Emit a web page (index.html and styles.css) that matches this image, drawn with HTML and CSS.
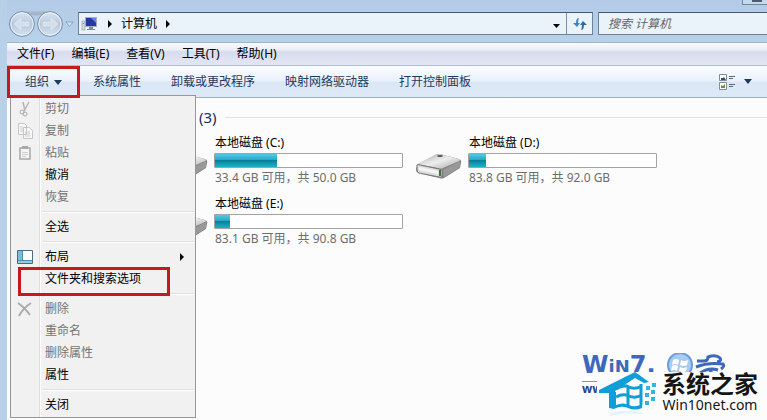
FILE: index.html
```html
<!DOCTYPE html>
<html lang="zh-CN">
<head>
    <meta charset="UTF-8">
    <meta name="viewport" content="width=device-width, initial-scale=1.0">
    <title>计算机</title>
    <link rel="stylesheet" href="styles.css">
</head>
<body>
    <div class="window">

        <!-- Address bar -->
        <header class="nav-bar">
            <span class="caption-buttons"><i></i></span>
            <svg class="nav-buttons" width="66" height="28" viewBox="0 0 66 28" aria-hidden="true">
                <defs>
                    <linearGradient id="ball" x1="0" y1="0" x2="0" y2="1">
                        <stop offset="0" stop-color="#dce6f1"/>
                        <stop offset=".5" stop-color="#b8c9dc"/>
                        <stop offset="1" stop-color="#d5e3f0"/>
                    </linearGradient>
                </defs>
                <path d="M15 1.500h28q-14 8-28 0z" fill="#a3b5cb"/>
                <circle cx="15" cy="14" r="12.4" fill="url(#ball)" stroke="#768aa3"/>
                <circle cx="43" cy="14" r="12.4" fill="url(#ball)" stroke="#768aa3"/>
                <circle cx="15" cy="14" r="11.2" fill="none" stroke="#e8f0f8"/>
                <circle cx="43" cy="14" r="11.2" fill="none" stroke="#e8f0f8"/>
                <path d="M7 14l7-6v4h8v4h-8v4z" fill="#d3dfeb" stroke="#e2ebf3" stroke-width=".6"/>
                <path d="M51 14l-7-6v4h-8v4h8v4z" fill="#d3dfeb" stroke="#e2ebf3" stroke-width=".6"/>
                <path d="M59 12h7l-3.500 4.500z" fill="#d5e2f0" stroke="#8198b5" stroke-width=".8"/>
            </svg>
            <div class="address">
                <svg width="18" height="16" viewBox="0 0 18 16" aria-hidden="true">
                    <rect x="1" y="5" width="3" height="9" fill="#d5dce2" stroke="#8997a5" stroke-width=".6"/>
                    <rect x="2" y="7" width="1" height="1" fill="#4d9a50"/>
                    <rect x="4.500" y="1.500" width="11" height="9" fill="#2437a5" stroke="#a3aec0"/>
                    <path d="M10 2h5v5z" fill="#6582e0"/>
                    <path d="M8 11h4v2h2v1H6v-1h2z" fill="#7e8b99"/>
                </svg>
                <svg class="crumb-arrow" width="4" height="8" viewBox="0 0 4 8"><path d="M0 0l4 4-4 4z"/></svg>
                <span>计算机</span>
                <svg class="crumb-arrow" width="4" height="8" viewBox="0 0 4 8"><path d="M0 0l4 4-4 4z"/></svg>
                <button class="address-drop" aria-label="地址"><svg width="7" height="4" viewBox="0 0 7 4"><path d="M0 0h7L3.500 4z"/></svg></button>
                <button class="refresh" aria-label="刷新">
                    <svg width="16" height="14" viewBox="0 0 16 14">
                        <path d="M7 1Q4 1 4 6H1l4 4 3-4H6Q6 3 7 1z" fill="#3f88bd"/>
                        <path d="M9 13q3 0 3-5h3l-4-4-3 4h2q0 3-1 5z" fill="#2f6ea5"/>
                    </svg>
                </button>
            </div>
            <input class="search" type="text" placeholder="搜索 计算机" aria-label="搜索">
        </header>

        <!-- Menu bar -->
        <nav class="menu-bar">
            <button>文件(F)</button>
            <button>编辑(E)</button>
            <button>查看(V)</button>
            <button>工具(T)</button>
            <button>帮助(H)</button>
        </nav>

        <!-- Command bar -->
        <div class="toolbar">
            <button class="organize">组织 <svg width="8" height="5" viewBox="0 0 8 5"><path d="M0 0h8L4 5z"/></svg></button>
            <button>系统属性</button>
            <button>卸载或更改程序</button>
            <button>映射网络驱动器</button>
            <button>打开控制面板</button>
            <button class="view" aria-label="更改视图">
                <svg width="16" height="16" viewBox="0 0 16 16">
                    <path d="M.5.5h7v6h-7zM.5 8.500h7v7h-7z" fill="#fff" stroke="#7f8f92"/>
                    <path d="M2 4h2l1-1 2 3H2z" fill="#24566b"/>
                    <path d="M2 11l2 1 2-2v4H2z" fill="#7c8b2c"/>
                    <path d="M10 2.500h6M10 4.500h4M10 10.500h6M10 12.500h4" stroke="#55667d"/>
                </svg>
                <svg width="8" height="5" viewBox="0 0 8 5"><path d="M0 0h8L4 5z"/></svg>
            </button>
        </div>

        <!-- Drives -->
        <main class="content">
            <h2 class="group">(3)</h2>
            <div class="drives">
                <div class="drive">
                    <svg class="drive-icon" width="48" height="28" viewBox="0 0 48 28"><use href="#disk"/></svg>
                    <div class="drive-info">
                        <div class="drive-name">本地磁盘 (C:)</div>
                        <div class="bar"><div class="fill" style="width: 33%"></div></div>
                        <div class="space">33.4 GB 可用，共 50.0 GB</div>
                    </div>
                </div>
                <div class="drive">
                    <svg class="drive-icon" width="48" height="28" viewBox="0 0 48 28">
                        <defs>
                            <linearGradient id="top" x1="0" y1="0" x2="1" y2="1">
                                <stop offset="0" stop-color="#aaa"/>
                                <stop offset=".5" stop-color="#ededed"/>
                                <stop offset="1" stop-color="#aaa"/>
                            </linearGradient>
                        </defs>
                        <g id="disk">
                            <path d="M2 13L20 3q2-1 5-1l19 5q3 1 2 4l-1 5-16 10q-2 1-5 0L3 21q-2-1-2-3z" fill="#858585"/>
                            <path d="M2 12L20 3q2-1 5-1l19 5q2 1 0 2L28 16q-2 1-5 0z" fill="url(#top)"/>
                            <path d="M2 13q0-1 3 0l19 4q3 0 3 2v5q0 2-3 1L4 21q-2-1-2-3z" fill="#dedede" stroke="#777"/>
                            <path d="M4 15l19 4v3L4 18z" fill="#f5f5f5"/>
                            <path d="M28 18l17-9v6l-16 10z" fill="#999"/>
                            <path d="M25 18v6" stroke="#387a35" stroke-width="2"/>
                            <ellipse cx="25" cy="4" rx="3" ry="1" fill="#555"/>
                        </g>
                    </svg>
                    <div class="drive-info">
                        <div class="drive-name">本地磁盘 (D:)</div>
                        <div class="bar"><div class="fill" style="width: 9%"></div></div>
                        <div class="space">83.8 GB 可用，共 92.0 GB</div>
                    </div>
                </div>
                <div class="drive">
                    <svg class="drive-icon" width="48" height="28" viewBox="0 0 48 28"><use href="#disk"/></svg>
                    <div class="drive-info">
                        <div class="drive-name">本地磁盘 (E:)</div>
                        <div class="bar"><div class="fill" style="width: 8%"></div></div>
                        <div class="space">83.1 GB 可用，共 90.8 GB</div>
                    </div>
                </div>
            </div>
        </main>

        <!-- Organize menu -->
        <div class="menu">
            <button disabled>
                <svg width="16" height="16" viewBox="0 0 16 16"><path d="M6 1l2 9M12 1L7 10" stroke="#b5b5b5" stroke-width="1.500" fill="none"/><circle cx="5" cy="11" r="2" fill="none" stroke="#aaa"/><circle cx="8" cy="13" r="2" fill="none" stroke="#aaa"/></svg>
                剪切
            </button>
            <button disabled>
                <svg width="16" height="16" viewBox="0 0 16 16"><path d="M1.500.5h6l2 2v9h-8zM6.500 4.500h6l3 3v8h-9z" fill="#f7f7f7" stroke="#c6c6c6"/><path d="M3 4h3M3 6h3M3 8h3M8 9h5M8 11h5M8 13h5" stroke="#ccc"/></svg>
                复制
            </button>
            <button disabled>
                <svg width="16" height="16" viewBox="0 0 16 16"><path d="M3 3h10v11H3z" fill="#f4f4f4" stroke="#a8a8a8" stroke-width="1.500"/><path d="M5 1h6v3H5z" fill="#aaa"/><path d="M5 7.500h6M5 9.500h6M5 11.500h4" stroke="#d0d0d0"/></svg>
                粘贴
            </button>
            <button>撤消</button>
            <button disabled>恢复</button>
            <hr>
            <button>全选</button>
            <hr>
            <button>
                <svg width="16" height="14" viewBox="0 0 16 14"><path d="M.5.5h15v13H.5z" fill="#fff" stroke="#4d6b7e"/><path d="M1 1h4v9H1z" fill="#75bfe0"/><path d="M1 10h14v3H1z" fill="#8fcce0"/><path d="M5.500 1v9M1 10.500h14" stroke="#4e8dad"/></svg>
                布局
                <svg class="sub-arrow" width="4" height="8" viewBox="0 0 4 8"><path d="M0 0l4 4-4 4z"/></svg>
            </button>
            <button class="marked">文件夹和搜索选项</button>
            <hr>
            <button disabled>
                <svg width="16" height="16" viewBox="0 0 16 16"><path d="M1 2q6 4 12 12M14 2Q6 7 2 15" stroke="#aaa" stroke-width="2" fill="none"/></svg>
                删除
            </button>
            <button disabled>重命名</button>
            <button disabled>删除属性</button>
            <button>属性</button>
            <hr>
            <button>关闭</button>
        </div>

        <!-- Site marks -->
        <div class="win7-mark">
            <span class="win7-name">W<small>iN</small>7.</span>
            <svg width="62" height="24" viewBox="0 0 62 24">
                <circle cx="16" cy="12" r="12" fill="#a9cbef" stroke="#6a9bdc" stroke-width="2"/>
                <path d="M9 7q3-2 6 0l-1 5q-3-2-6 0zM17 7q3 2 7 0l-1 5q-3 2-7 0zM8 13q3-2 6 0l-1 5q-3-2-6 0zM16 14q3 2 7 0l-1 4q-3 2-7 0z" fill="#fff"/>
                <path d="M33 8h7q4 0 4-4 8-3 12 1 2 3-3 4M32 14q12-5 27-3 2 2-2 5M36 20q9-6 18-3M45 17q4 1 1 6" fill="none" stroke="#3d68bd" stroke-width="3"/>
            </svg>
            <span class="win7-url">ww</span>
        </div>
        <div class="site-mark">
            <svg width="60" height="46" viewBox="0 0 60 46">
                <path d="M1 18L37 0l14 10-5 1-9-5-20 13v2H1z" fill="#0f9fd8"/>
                <path d="M11 20h7v13q7-3 13 0t13-1v4q-7 3-14 0t-14 1l-5-1z" fill="#0f9fd8"/>
                <path d="M18 17q7-5 13-2t13-1M18 25q7-4 13-1t13-1M30 14v20M43 12v21" fill="none" stroke="#0f9fd8" stroke-width="3"/>
                <path d="M48 14h4v4h-4zM54 11h4v4h-4zM47 21h4v4h-4zM53 18h4v4h-4zM47 29h4v4h-4zM53 25h4v4h-4z" fill="#35b4e4"/>
                <path d="M12 41q15-4 32-1v2q-16-2-32 2z" fill="#e4f3fa"/>
            </svg>
            <div class="site-text">
                <strong>系统之家</strong>
                <span>Win10net.com</span>
            </div>
        </div>
    </div>
</body>
</html>
```

FILE: styles.css
```css
* {
    box-sizing: border-box;
}

body {
    margin: 0;
    font-family: "Noto Sans", "Noto Sans CJK SC", sans-serif;
    font-size: 12px;
    line-height: 16px;
    color: #000;
}

button {
    padding: 0;
    border: 0;
    background: none;
    font: inherit;
    color: inherit;
}

.window {
    position: relative;
    display: flex;
    flex-direction: column;
    height: 100vh;
    overflow: hidden;
    padding-left: 7px;
    background: #b9d0e9;
}

/* Address bar */
.nav-bar {
    display: flex;
    align-items: center;
    gap: 5px;
    height: 42px;
    padding-top: 5px;
    background: linear-gradient(#b3cbe6, #b8d2ea);
}

.caption-buttons {
    position: absolute;
    top: 0;
    right: 0;
    width: 25px;
    height: 5px;
    border: 1px solid #6f87a5;
    border-top: 0;
    border-right: 0;
    background: #c6d8ec;
}

.caption-buttons i {
    display: block;
    width: 10px;
    height: 2px;
    margin-left: 9px;
    background: #4c5b70;
}

.address {
    display: flex;
    flex: 1;
    align-items: center;
    height: 23px;
    padding-left: 2px;
    border: 1px solid #6d819b;
    border-top-color: #46586f;
    background: #eaf2fa;
}

.crumb-arrow {
    margin: 0 9px;
}

.address-drop {
    width: 20px;
    margin-left: auto;
    line-height: 8px;
}

.refresh {
    display: flex;
    align-items: center;
    justify-content: center;
    width: 26px;
    height: 21px;
    border-left: 1px solid #7c8fa8;
}

.search {
    width: 169px;
    height: 23px;
    padding: 0 9px;
    border: 1px solid #6d819b;
    border-top-color: #46586f;
    border-right: 0;
    border-radius: 0;
    background: #eaf2fa;
    font: italic 12px "Noto Sans", "Noto Sans CJK SC", sans-serif;
}

.search::placeholder {
    color: #666;
}

/* Menu bar */
.menu-bar {
    display: flex;
    gap: 17px;
    height: 24px;
    padding-left: 10px;
    border-top: 1px solid #a3b4c8;
    border-bottom: 1px solid #b6bdcc;
    background: linear-gradient(#f8fafd 0, #eceff8 30%, #d8dcee 40%, #e2e6f4 100%);
}

/* Command bar */
.toolbar {
    display: flex;
    gap: 30px;
    height: 32px;
    padding-right: 15px;
    border-bottom: 1px solid #9db0c6;
    background: linear-gradient(#fafdff 0, #eaf1fb 48%, #dce7f5 52%, #dde9f6 100%);
    color: #1e395b;
}

.organize {
    position: relative;
    z-index: 1;
    display: flex;
    align-items: center;
    gap: 5px;
    width: 73px;
    height: 32px;
    margin-right: -17px;
    padding-left: 15px;
    border: 3px solid #c61a1a;
}

.toolbar svg {
    fill: #1e395b;
}

.view {
    display: flex;
    align-items: center;
    gap: 9px;
    margin-left: auto;
}

/* Drives */
.content {
    flex: 1;
    padding: 10px 0 0 192px;
    background: #fcfcfc;
}

.group {
    display: flex;
    align-items: center;
    gap: 8px;
    margin: 0 0 8px;
    font-size: 15px;
    font-weight: normal;
    line-height: 18px;
    color: #1e2c5e;
}

.group::after {
    content: "";
    flex: 1;
    height: 1px;
    background: #dfe2e8;
}

.drives {
    display: grid;
    grid-template-columns: 254px 254px;
    row-gap: 8px;
    margin-left: -38px;
}

.drive {
    display: flex;
    gap: 5px;
}

.drive-icon {
    margin-top: 18px;
}

.drive-info {
    width: 189px;
}

.drive-name {
    margin-bottom: 2px;
    padding-left: 1px;
    line-height: 17px;
}

.bar {
    height: 15px;
    border: 1px solid #a3a3a3;
    border-radius: 1px;
    background: #fff;
}

.fill {
    height: 13px;
    background: linear-gradient(#54cbe5 0, #25a8c6 45%, #087f9b 50%, #12a1b9 80%, #23adc4 100%);
}

.space {
    padding-left: 1px;
    line-height: 19px;
    color: #6d6d6d;
}

/* Organize menu */
.menu {
    position: absolute;
    top: 95px;
    left: 10px;
    width: 186px;
    padding: 2px 1px 1px;
    border: 1px solid #979797;
    background: linear-gradient(90deg, #f1f1f1 28px, #dedede 28px, #dedede 29px, #fff 29px, #fff 30px, #f1f1f1 30px);
}

.menu button {
    position: relative;
    display: flex;
    align-items: center;
    width: 100%;
    height: 22px;
    padding-left: 33px;
}

.menu button:disabled {
    color: #747474;
}

.menu button svg:first-child {
    width: 16px;
    margin: 0 12px 0 -28px;
}

.menu button .sub-arrow {
    margin: 0 10px 0 auto;
}

.menu hr {
    height: 2px;
    margin: 3px 0 3px 30px;
    border: 0;
    border-top: 1px solid #e0e0e0;
    background: #fff;
}

.menu .marked::before {
    content: "";
    position: absolute;
    top: -1px;
    left: 6px;
    width: 146px;
    height: 23px;
    border: 3px solid #c61a1a;
    z-index: 1;
}

/* Site marks */
.win7-mark {
    position: absolute;
    right: 37px;
    bottom: 24px;
    display: grid;
    grid-template-columns: 82px 66px;
    row-gap: 2px;
    color: #3d68bd;
}

.win7-name {
    font: bold 24px/24px "DejaVu Sans", sans-serif;
}

.win7-name small {
    font-size: 18px;
}

.win7-url {
    width: 22px;
    border-top: 1px solid #7794cf;
    font-weight: bold;
    line-height: 14px;
    color: #24408e;
}

.site-mark {
    position: absolute;
    right: 2px;
    bottom: 0;
    display: flex;
    gap: 4px;
    width: 168px;
    height: 48px;
    padding-left: 1px;
    background: #fcfcfc;
}

.site-text {
    display: flex;
    flex-direction: column;
    align-items: center;
    color: #151515;
}

.site-text strong {
    font-size: 24px;
    line-height: 24px;
}

.site-text span {
    font-size: 14px;
    line-height: 18px;
}
```
